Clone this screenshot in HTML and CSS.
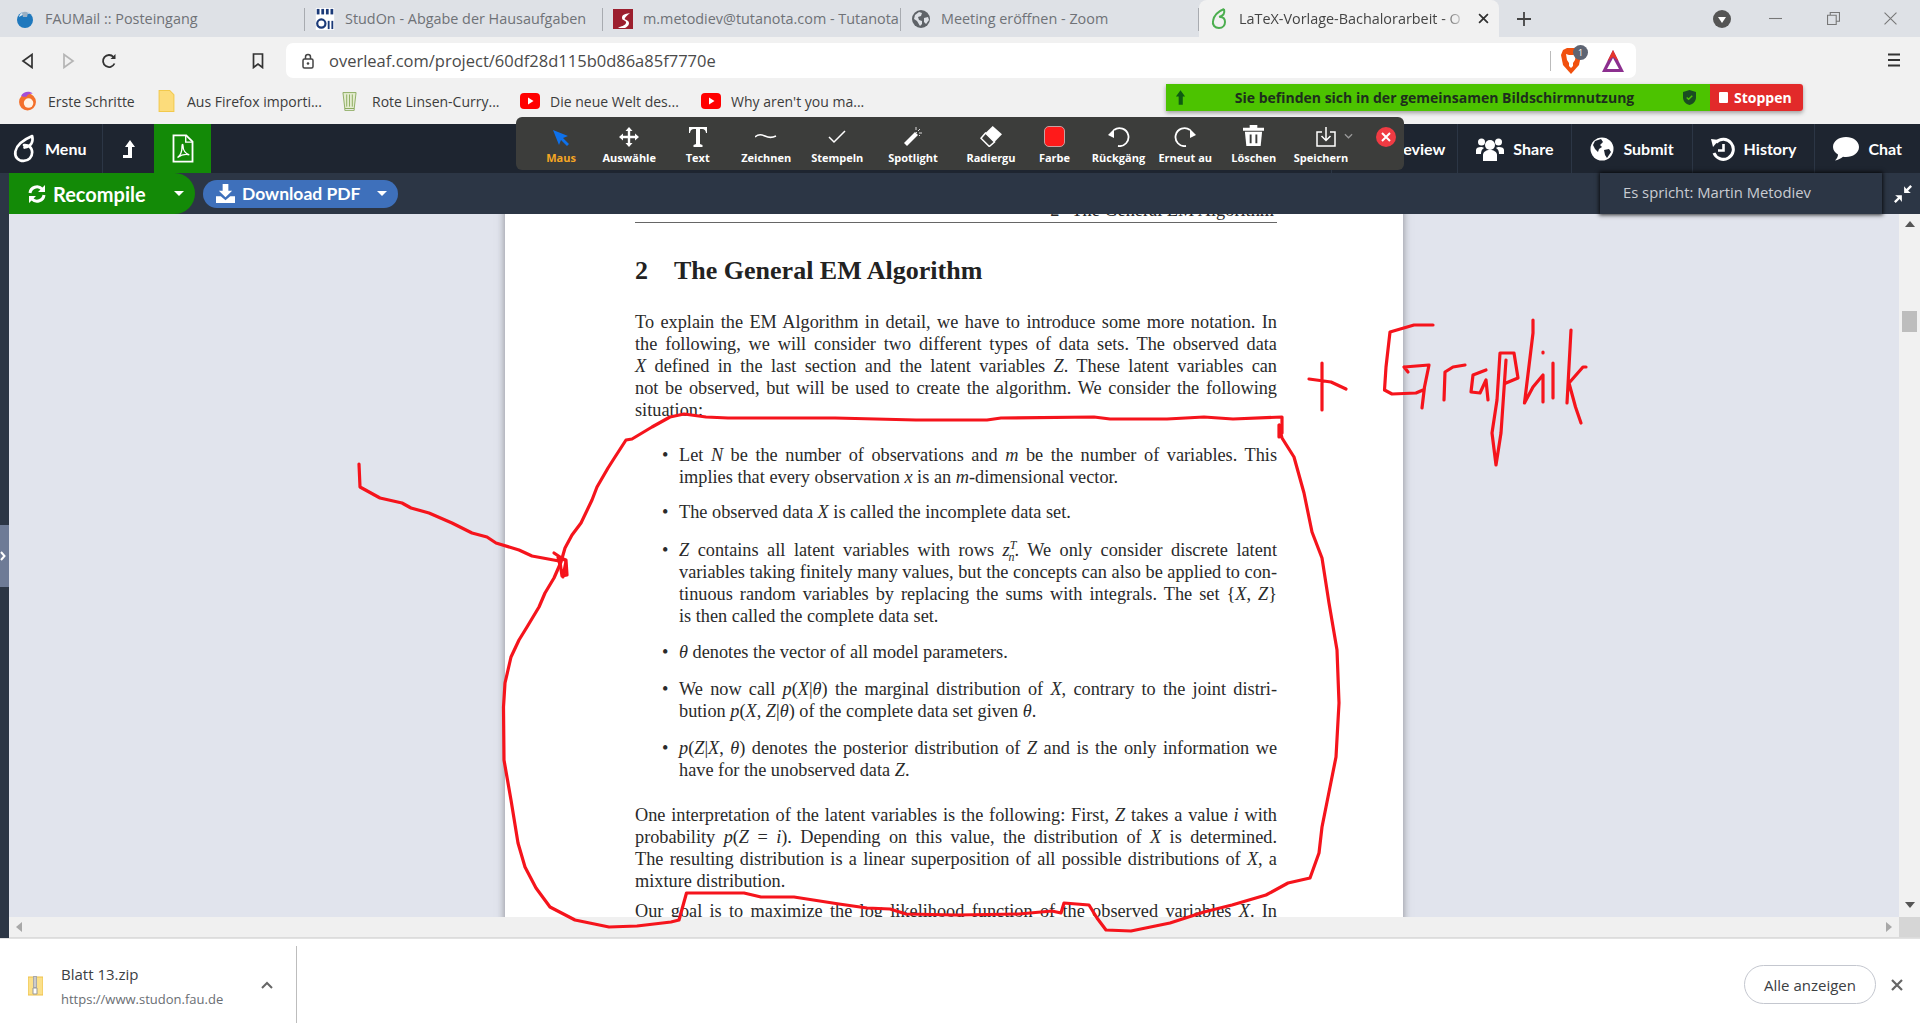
FILE: index.html
```html
<!DOCTYPE html>
<html lang="de">
<head>
    <meta charset="UTF-8">
    <title>LaTeX-Vorlage-Bachalorarbeit - Online LaTeX Editor Overleaf</title>
    <link rel="stylesheet" href="styles.css">
</head>
<body>
    <!-- Browser -->
    <div class="tabs">
        <div class="tab tab-first">
            <svg class="tab-icon" viewBox="0 0 20 20"><circle cx="10" cy="11" r="8" fill="#1f78bd"/><path d="M4 8c1-5 8-7 11-3-3-1-7 0-11 3z" fill="#dfe9f2"/><path d="M7 4a4 4 0 0 1 6 0l-1 4H8z" fill="#9ab0c4"/></svg>
            <span class="tab-title">FAUMail :: Posteingang</span>
        </div>
        <div class="tab">
            <svg class="tab-icon" viewBox="0 0 20 24"><rect width="20" height="24" fill="#fff"/><g fill="#1b3a78"><rect x="1" y="1" width="3" height="6"/><rect x="6" y="1" width="3" height="6"/><rect x="11" y="1" width="3" height="6"/><rect x="16" y="1" width="3" height="6"/><rect x="13" y="14" width="2" height="9"/><rect x="17" y="14" width="2" height="9"/></g><circle cx="6" cy="17" r="4.5" fill="none" stroke="#1b3a78" stroke-width="2.4"/></svg>
            <span class="tab-title">StudOn - Abgabe der Hausaufgaben</span>
        </div>
        <div class="tab">
            <svg class="tab-icon" viewBox="0 0 20 20"><path d="M0 0h20v20H0z" fill="#9c1f2e"/><path d="M17 4c-6 1-8 2-8 5s5 2 4 5-5 3-8 5h7c4-2 5-5 3-7s-4-1-3-3 3-3 5-5z" fill="#fff"/></svg>
            <span class="tab-title">m.metodiev@tutanota.com - Tutanota</span>
        </div>
        <div class="tab">
            <svg class="tab-icon" viewBox="0 0 20 20"><circle cx="10" cy="10" r="9" fill="#5f6368"/><path d="M4 6l4-3 3 1-1 3-3 1 1 3 3 1v3l-2 2-3-5-3-2zM13 9l4-1 1 3-3 4-2-2z" fill="#dee1e6"/></svg>
            <span class="tab-title">Meeting eröffnen - Zoom</span>
        </div>
        <div class="tab tab-active">
            <svg class="tab-icon tab-leaf" viewBox="0 0 16 22"><path d="M13 1C8 3 3 7 2 13c-1 4 2 7 6 7s6-3 6-6-2-5-5-5M13 1c1 4-1 7-5 8" fill="none" stroke="#4cae4f" stroke-width="2"/></svg>
            <span class="tab-title">LaTeX-Vorlage-Bachalorarbeit - O</span>
            <svg class="tab-close" viewBox="0 0 10 10"><path d="M1 1l8 8M9 1l-8 8" stroke="#333" stroke-width="1.6"/></svg>
        </div>
        <svg class="tab-plus" viewBox="0 0 14 14"><path d="M7 0v14M0 7h14" stroke="#444" stroke-width="1.8"/></svg>
        <div class="win-controls">
            <svg class="win-round" viewBox="0 0 18 18"><circle cx="9" cy="9" r="9" fill="#555"/><path d="M5 7h8l-4 6z" fill="#fff"/></svg>
            <svg class="win-btn win-min" viewBox="0 0 12 12"><path d="M0 6h12" stroke="#777"/></svg>
            <svg class="win-btn win-max" viewBox="0 0 12 12"><path d="M.5 3h8v8.500h-8zM3 3V.5h8.500v8H8.500" fill="none" stroke="#777"/></svg>
            <svg class="win-btn win-x" viewBox="0 0 12 12"><path d="M.5.5l11 11M11.500.5l-11 11" stroke="#777"/></svg>
        </div>
    </div>

    <div class="toolbar">
        <svg class="nav-btn nav-back" viewBox="0 0 14 16"><path d="M11 1.500v13L2 8z" fill="none" stroke="#333" stroke-width="1.700"/></svg>
        <svg class="nav-btn nav-fwd" viewBox="0 0 14 16"><path d="M3 1.500v13L12 8z" fill="none" stroke="#b5b5b5" stroke-width="1.700"/></svg>
        <svg class="nav-btn nav-reload" viewBox="0 0 16 16"><path d="M13.500 10.500A6 6 0 1 1 12.500 4" fill="none" stroke="#333" stroke-width="1.800"/><path d="M14.500 1v5h-5z" fill="#333"/></svg>
        <svg class="nav-btn nav-mark" viewBox="0 0 14 16"><path d="M2.500 1h9v13.500L7 11l-4.500 3.500z" fill="none" stroke="#333" stroke-width="1.700"/></svg>
        <div class="omnibox">
            <svg class="lock" viewBox="0 0 12 16"><rect x="1" y="6" width="10" height="9" rx="1.500" fill="none" stroke="#444" stroke-width="1.500"/><path d="M3.500 6V4a2.500 2.500 0 0 1 5 0v2" fill="none" stroke="#444" stroke-width="1.500"/><circle cx="6" cy="10.500" r="1.300" fill="#444"/></svg>
            <span class="url">overleaf.com/project/60df28d115b0d86a85f7770e</span>
            <span class="omni-sep"></span>
            <span class="brave">
                <svg class="brave-lion" viewBox="0 0 20 26"><path d="M2 2l4-2h8l4 2 2 5-2 10-8 9-8-9L0 7z" fill="#f1500e"/><path d="M5 6l3 1h4l3-1-1 6-2 3v3l-2 2-2-2v-3l-2-3z" fill="#fff"/></svg>
                <span class="brave-badge">1</span>
            </span>
            <svg class="bat" viewBox="0 0 24 24"><path d="M12 1L1 23h22z" fill="#8c2f8f"/><path d="M12 1L6.500 12 12 8l5.500 4z" fill="#e5352b"/><path d="M12 9l-6 11h12z" fill="#fff"/></svg>
        </div>
        <svg class="chrome-menu" viewBox="0 0 12 14"><path d="M0 1.500h12M0 7h12M0 12.500h12" stroke="#333" stroke-width="1.800"/></svg>
    </div>

    <div class="bookmarks">
        <div class="bm">
            <svg class="bm-icon" viewBox="0 0 18 20"><circle cx="9" cy="11" r="8" fill="#f4702b"/><circle cx="10" cy="12" r="4.500" fill="#fff3e6"/><path d="M3 5c2-4 8-5 11-2-3 0-5 1-6 3-3 0-4 0-5-1z" fill="#a34dd6"/></svg>
            <span>Erste Schritte</span>
        </div>
        <div class="bm">
            <svg class="bm-icon" viewBox="0 0 18 20"><path d="M2 0h10l4 4v16H2z" fill="#fcdc7b" stroke="#f2c94c"/></svg>
            <span>Aus Firefox importi...</span>
        </div>
        <div class="bm">
            <svg class="bm-icon" viewBox="0 0 16 22"><path d="M1 2h14l-2 17H3z" fill="#e4ecd0" stroke="#8bab5e"/><path d="M3 19h10v2H3zM5 4v13M8 4v13M11 4v13" stroke="#8bab5e" fill="none"/></svg>
            <span>Rote Linsen-Curry...</span>
        </div>
        <div class="bm">
            <svg class="bm-icon bm-yt" viewBox="0 0 20 20"><rect y="2" width="20" height="16" rx="4" fill="#f00"/><path d="M8 6.500l5.500 3.500L8 13.500z" fill="#fff"/></svg>
            <span>Die neue Welt des...</span>
        </div>
        <div class="bm">
            <svg class="bm-icon bm-yt" viewBox="0 0 20 20"><rect y="2" width="20" height="16" rx="4" fill="#f00"/><path d="M8 6.500l5.500 3.500L8 13.500z" fill="#fff"/></svg>
            <span>Why aren't you ma...</span>
        </div>
    </div>

    <!-- Overleaf -->
    <header class="ol-nav">
        <div class="ol-item ol-menu">
            <svg class="ol-logo" viewBox="0 0 24 30"><path d="M20 2C13 5 4 10 2.500 18c-1 6 3 10 8.500 10s9-4 9-9-4-8-8.500-7.500M20 2c1.500 6-1 11-8 12" fill="none" stroke="#fff" stroke-width="2.800" stroke-linecap="round"/></svg>
            <span>Menu</span>
        </div>
        <div class="ol-up">
            <svg viewBox="0 0 12 18" width="12" height="18"><path d="M7 0l5 7H9v11H0v-3h5V7H2z" fill="#fff"/></svg>
        </div>
        <div class="ol-pdf">
            <svg viewBox="0 0 24 32" width="24" height="29"><path d="M1.500 1.500h14l7 7v22h-21z" fill="none" stroke="#fff" stroke-width="2"/><path d="M15 1.500v7.500h7.500M6 26c3-2 5-7 5-13 0-2 1-2 1 0 0 5 3 9 7 10-4-1-9 0-13 3z" fill="none" stroke="#fff" stroke-width="1.500"/></svg>
        </div>
        <div class="ol-right">
            <div class="ol-item ol-review"><span>Review</span></div>
            <div class="ol-item">
                <svg viewBox="0 0 28 28" width="28" height="28"><circle cx="14" cy="10" r="5" fill="#fff"/><path d="M7 26v-6c0-3 3-5 7-5s7 2 7 5v6z" fill="#fff"/><circle cx="5.500" cy="7" r="3.500" fill="#fff"/><circle cx="22.500" cy="7" r="3.500" fill="#fff"/><path d="M0 19v-4c0-2 2-3 5-3 1 0 2 0 3 1-2 1-3 3-3 6zM28 19v-4c0-2-2-3-5-3-1 0-2 0-3 1 2 1 3 3 3 6z" fill="#fff"/></svg>
                <span>Share</span>
            </div>
            <div class="ol-item">
                <svg viewBox="0 0 24 24" width="24" height="24"><circle cx="12" cy="12" r="11.500" fill="#fff"/><path d="M5 4l6-2 2 3-3 3 2 2-3 2-1 3-3-3-2-4zM14 13l5-1 2 3-4 6-2-3z" fill="#1e2530"/></svg>
                <span>Submit</span>
            </div>
            <div class="ol-item">
                <svg viewBox="0 0 24 24" width="24" height="24"><path d="M5 5.500A10 10 0 1 1 3 16" fill="none" stroke="#fff" stroke-width="3"/><path d="M0 2l8 1-6 7z" fill="#fff"/><path d="M12.500 7v6.500H7" fill="none" stroke="#fff" stroke-width="2.600"/></svg>
                <span>History</span>
            </div>
            <div class="ol-item">
                <svg viewBox="0 0 26 24" width="26" height="24"><path d="M13 0c7 0 13 4 13 10s-6 10-13 10c-1 0-2 0-3-.200C8 21.500 5 23 2 23.500c2-2 3-4 3-6C2 15.500 0 13 0 10 0 4 6 0 13 0z" fill="#fff"/></svg>
                <span>Chat</span>
            </div>
        </div>
    </header>

    <div class="ol-sub">
        <div class="recompile">
            <svg viewBox="0 0 18 20" width="18" height="20"><path d="M2 9a7 7 0 0 1 12-4M16 11a7 7 0 0 1-12 4" fill="none" stroke="#fff" stroke-width="3"/><path d="M17 1v7h-7zM1 19v-7h7z" fill="#fff"/></svg>
            <span>Recompile</span>
            <i class="caret caret-green"></i>
        </div>
        <div class="download">
            <svg viewBox="0 0 20 20" width="19" height="19"><path d="M7 0h6v7h4l-7 7-7-7h4z" fill="#fff"/><path d="M0 13h5l5 4 5-4h5v7H0z" fill="#fff"/></svg>
            <span>Download PDF</span>
            <i class="caret"></i>
        </div>
        <svg class="compress" viewBox="0 0 16 16" width="18" height="18"><path d="M16 1.500L14.500 0 11 3.500 9 1v6h6l-2.500-2zM0 14.500L1.500 16 5 12.500 7 15V9H1l2.500 2z" fill="#fff"/></svg>
    </div>

    <main class="ol-body">
        <div class="strip"><div class="strip-handle"><svg viewBox="0 0 6 10" width="6" height="10"><path d="M1 1l3.500 4L1 9" fill="none" stroke="#fff" stroke-width="2"/></svg></div></div>
        <div class="viewer">
            <div class="viewer-top">
                <div class="pdf-scroll">
                    <article class="page">
                        <div class="run-head"><span class="run-num">2</span>The General EM Algorithm</div>
                        <h2 class="sec"><span class="sec-num">2</span>The General EM Algorithm</h2>
                        <p class="par">
                            <span class="ln">To explain the EM Algorithm in detail, we have to introduce some more notation. In</span>
                            <span class="ln">the following, we will consider two different types of data sets. The observed data</span>
                            <span class="ln"><i>X</i> defined in the last section and the latent variables <i>Z</i>. These latent variables can</span>
                            <span class="ln">not be observed, but will be used to create the algorithm. We consider the following</span>
                            <span class="ln ln-end">situation:</span>
                        </p>
                        <ul class="items">
                            <li class="it it-1">
                                <span class="ln">Let <i>N</i> be the number of observations and <i>m</i> be the number of variables. This</span>
                                <span class="ln ln-end">implies that every observation <i>x</i> is an <i>m</i>-dimensional vector.</span>
                            </li>
                            <li class="it it-2">
                                <span class="ln ln-end">The observed data <i>X</i> is called the incomplete data set.</span>
                            </li>
                            <li class="it it-3">
                                <span class="ln"><i>Z</i> contains all latent variables with rows <i>z</i><sup class="idx"><i>T</i></sup><sub class="idx idx-low"><i>n</i></sub>. We only consider discrete latent</span>
                                <span class="ln">variables taking finitely many values, but the concepts can also be applied to con-</span>
                                <span class="ln">tinuous random variables by replacing the sums with integrals. The set {<i>X</i>, <i>Z</i>}</span>
                                <span class="ln ln-end">is then called the complete data set.</span>
                            </li>
                            <li class="it it-4">
                                <span class="ln ln-end"><i>θ</i> denotes the vector of all model parameters.</span>
                            </li>
                            <li class="it it-5">
                                <span class="ln">We now call <i>p</i>(<i>X</i>|<i>θ</i>) the marginal distribution of <i>X</i>, contrary to the joint distri-</span>
                                <span class="ln ln-end">bution <i>p</i>(<i>X</i>, <i>Z</i>|<i>θ</i>) of the complete data set given <i>θ</i>.</span>
                            </li>
                            <li class="it it-5">
                                <span class="ln"><i>p</i>(<i>Z</i>|<i>X</i>, <i>θ</i>) denotes the posterior distribution of <i>Z</i> and is the only information we</span>
                                <span class="ln ln-end">have for the unobserved data <i>Z</i>.</span>
                            </li>
                        </ul>
                        <p class="par par-2">
                            <span class="ln">One interpretation of the latent variables is the following: First, <i>Z</i> takes a value <i>i</i> with</span>
                            <span class="ln">probability <i>p</i>(<i>Z</i> = <i>i</i>). Depending on this value, the distribution of <i>X</i> is determined.</span>
                            <span class="ln">The resulting distribution is a linear superposition of all possible distributions of <i>X</i>, a</span>
                            <span class="ln ln-end">mixture distribution.</span>
                        </p>
                        <p class="par par-3">
                            <span class="ln">Our goal is to maximize the log likelihood function of the observed variables <i>X</i>. In</span>
                        </p>
                    </article>
                </div>
                <div class="vscroll">
                    <i class="arr arr-up"></i>
                    <div class="vthumb"></div>
                    <i class="arr arr-down"></i>
                </div>
            </div>
            <div class="hscroll">
                <i class="arr arr-left"></i>
                <i class="arr arr-right"></i>
                <div class="corner"></div>
            </div>
        </div>
    </main>

    <footer class="shelf">
        <svg class="zip" viewBox="0 0 15 20" width="15" height="20"><path d="M0 1h15v18H0z" fill="#fbe08a" stroke="#eec14a"/><path d="M5 0h4v12H5z" fill="#a9a9a9"/><path d="M6 2h2M6 4h2M6 6h2M6 8h2M6 10h2" stroke="#eee"/><path d="M5 12h4v6H5z" fill="#fff" stroke="#999"/></svg>
        <div class="dl-text">
            <div class="dl-name">Blatt 13.zip</div>
            <div class="dl-url">https://www.studon.fau.de</div>
        </div>
        <svg class="dl-chev" viewBox="0 0 12 8" width="12" height="8"><path d="M1 7l5-5 5 5" fill="none" stroke="#666" stroke-width="2"/></svg>
        <span class="dl-sep"></span>
        <button class="show-all">Alle anzeigen</button>
        <svg class="shelf-x" viewBox="0 0 12 12" width="12" height="12"><path d="M1 1l10 10M11 1L1 11" stroke="#666" stroke-width="2.200"/></svg>
    </footer>

    <!-- Zoom Overlays -->
    <div class="share-bar">
        <div class="share-msg">
            <svg class="share-pin" viewBox="0 0 12 16" width="11" height="15"><path d="M6 0l5 7H8.500v9H4V7H1z" fill="#0f5a12"/></svg>
            <span>Sie befinden sich in der gemeinsamen Bildschirmnutzung</span>
            <svg class="share-shield" viewBox="0 0 14 16" width="13" height="15"><path d="M7 0l7 2v6c0 4-3 7-7 8-4-1-7-4-7-8V2z" fill="#1a4d22"/><path d="M4 8l2 2 4-4" fill="none" stroke="#4cc300" stroke-width="1.500"/></svg>
        </div>
        <div class="share-stop"><i></i>Stoppen</div>
    </div>

    <div class="zoom-bar">
        <div class="z-item z-on">
            <svg viewBox="0 0 18 18" width="18" height="18"><path d="M1 1l15 6-5 2 6 6-2 2-6-6-2 5z" fill="#0e71eb"/></svg>
            <span>Maus</span>
        </div>
        <div class="z-item">
            <svg viewBox="0 0 20 20" width="20" height="20"><path d="M10 0l3.500 4h-2.300v4.800H16V6.500l4 3.500-4 3.500v-2.300h-4.800V16h2.300L10 20l-3.500-4h2.300v-4.800H4v2.300L0 10l4-3.500v2.300h4.800V4H6.500z" fill="#fff"/></svg>
            <span>Auswähle</span>
        </div>
        <div class="z-item">
            <svg viewBox="0 0 20 20" width="20" height="20"><path d="M1 0h18v6h-1c-.5-3-1.500-4-4-4h-2v15l2.500 1v2h-9v-2L8 17V2H6C3.500 2 2.500 3 2 6H1z" fill="#fff"/></svg>
            <span>Text</span>
        </div>
        <div class="z-item">
            <svg viewBox="0 0 22 20" width="22" height="20"><path d="M0 10c3-3 6-3 10-1s7 2 11 0" fill="none" stroke="#fff" stroke-width="1.500"/></svg>
            <span>Zeichnen</span>
        </div>
        <div class="z-item">
            <svg viewBox="0 0 18 20" width="18" height="20"><path d="M1 10l5 5L17 4" fill="none" stroke="#fff" stroke-width="1.500"/></svg>
            <span>Stempeln</span>
        </div>
        <div class="z-item">
            <svg viewBox="0 0 20 20" width="20" height="20"><path d="M12 5l3 3L4 19l-3-3z" fill="#fff"/><path d="M13 0v3M17 2l-2 2M19 6h-3M13 5l1 1M17 9l-1-1" stroke="#ddd" stroke-width="1"/></svg>
            <span>Spotlight</span>
        </div>
        <div class="z-item z-erase">
            <svg viewBox="0 0 22 21" width="22" height="21"><path d="M12.700 0L22 8.300 14.500 16 5.500 7z" fill="#fff"/><path d="M5.500 7L1 12.300l8.300 8.200 5.200-4.500z" fill="none" stroke="#fff" stroke-width="1.500"/></svg>
            <span>Radiergu</span>
        </div>
        <div class="z-item">
            <span class="z-color"></span>
            <span>Farbe</span>
        </div>
        <div class="z-item">
            <svg viewBox="0 0 22 22" width="22" height="22"><path d="M6 5a9 9 0 1 1 4 16" fill="none" stroke="#fff" stroke-width="1.800"/><path d="M0 10l6-6v9z" fill="#fff"/></svg>
            <span>Rückgäng</span>
        </div>
        <div class="z-item">
            <svg viewBox="0 0 22 22" width="22" height="22"><path d="M16 5a9 9 0 1 0-4 16" fill="none" stroke="#fff" stroke-width="1.800"/><path d="M22 10l-6-6v9z" fill="#fff"/></svg>
            <span>Erneut au</span>
        </div>
        <div class="z-item">
            <svg viewBox="0 0 22 24" width="21" height="23"><path d="M0 4h22v3H0zM7 4V1h8v3" fill="#fff"/><path d="M2 8h18l-1.500 15h-15z" fill="#fff"/><path d="M8 11v9M14 11v9" stroke="#3c3d3b" stroke-width="2"/></svg>
            <span>Löschen</span>
        </div>
        <div class="z-item z-save">
            <div class="z-save-icons">
                <svg viewBox="0 0 20 20" width="20" height="20"><path d="M6 5H1v14h18V5h-5M10 0v13M5.500 9l4.500 4.500L14.500 9" fill="none" stroke="#fff" stroke-width="1.500"/></svg>
                <svg class="z-chev" viewBox="0 0 10 6" width="9" height="6"><path d="M1 1l4 4 4-4" fill="none" stroke="#999" stroke-width="1.400"/></svg>
            </div>
            <span>Speichern</span>
        </div>
        <div class="z-close"><svg viewBox="0 0 10 10" width="10" height="10"><path d="M1 1l8 8M9 1L1 9" stroke="#fff" stroke-width="2"/></svg></div>
    </div>

    <div class="speaker">Es spricht: Martin Metodiev</div>

    <svg class="ink" viewBox="0 0 1920 1030">
        <path d="M359 464L360 487 380 498 402 503 411 508 429 513 452 523 472 533 487 537 496 543 519 550 532 556 559 561"/>
        <path d="M554 553L566 561 563 577 558 557 566 560 567 575 562 576 560 562"/>
        <path d="M1001 418L987 420 916 420 835 418 728 418 706 417 684 414 670 417 652 427 632 439 626 440 615 457 608 468 597 487 592 500 581 523 572 535 565 548 561 562 554 578 545 593 539 607 527 627 519 640 511 657 505 683 503.500 707 504 760 511 800 518 843 525 867 536 888 550 907 575 920 609 927 637 926 671 922 679 920 686.500 893 744 893 761 897 794 897 839 904 867 908 890 909 906 914 957 915 1019 914 1052 911 1061 913 1064 903 1089 905 1097 918 1106 930 1131 931 1170 923 1204 912 1232 905 1266 895 1288 883 1310 878 1319 853 1322 827 1330 787 1336 757 1339 703 1337 650 1329 603 1322 558 1312 532 1304 493 1294 457 1282 438 1279 425 1279 437 1282 433 1282 417 1233 419 1204 417 1167 419 1110 419 1094 417 1001 418"/>
        <path d="M1322 363V410M1309 379L1331 382 1346 389"/>
        <path d="M1433 325H1414L1390 332 1386 367 1384.500 390 1392 394 1416 393 1423 390M1404 367L1429 365 1424.500 387 1422 408M1404 367L1408 372"/>
        <path d="M1444 400L1445 372 1453 367 1465 365"/>
        <path d="M1486 370L1473 375 1471 392 1480 393 1486 380 1488 400"/>
        <path d="M1500 353L1497 400 1492 433 1496 465 1501 433 1506 360M1500 353H1514L1518 378 1506 383"/>
        <path d="M1533 320V333L1524.500 403 1533 387 1543 375V402"/>
        <path d="M1553 363V398M1543 352V353"/>
        <path d="M1571 330L1567 403M1586 367H1583L1569 383 1575.500 407 1581 423"/>
    </svg>
</body>
</html>
```

FILE: styles.css
```css
* {
    box-sizing: border-box;
}
html, body {
    margin: 0;
    padding: 0;
}
body {
    position: relative;
    width: 1920px;
    height: 1030px;
    overflow: hidden;
    background: #fff;
    font-family: "Open Sans", "Noto Sans", sans-serif;
}

/* Tabs */
.tabs {
    display: flex;
    height: 37px;
    background: #dee1e6;
    align-items: stretch;
}
.tab {
    display: flex;
    align-items: center;
    width: 298px;
    padding-left: 10px;
    font-size: 14.4px;
    color: #6f7277;
    white-space: nowrap;
    overflow: hidden;
    position: relative;
}
.tab::after {
    content: "";
    position: absolute;
    right: 0;
    top: 8px;
    bottom: 6px;
    width: 1px;
    background: #a8abb0;
}
.tab-first {
    width: 305px;
    padding-left: 15px;
}
.tab-icon {
    width: 20px;
    height: 22px;
    flex: none;
    margin-right: 10px;
}
.tab-active {
    width: 300px;
    margin-left: 0;
    padding-left: 12px;
    background: #f1f1f1;
    border-radius: 8px 8px 0 0;
    color: #444;
}
.tab-active::after {
    display: none;
}
.tab-leaf {
    width: 16px;
    margin-right: 12px;
}
.tab-active .tab-title {
    width: 227px;
    overflow: hidden;
    -webkit-mask-image: linear-gradient(to right, #000 90%, transparent);
    mask-image: linear-gradient(to right, #000 90%, transparent);
}
.tab-close {
    width: 11px;
    height: 11px;
    margin-left: 12px;
}
.tab-plus {
    width: 14px;
    height: 14px;
    margin: 12px 0 0 18px;
}
.win-controls {
    margin-left: auto;
    display: flex;
    align-items: center;
}
.win-round {
    width: 18px;
    height: 18px;
    margin-right: 38px;
}
.win-btn {
    width: 13px;
    height: 13px;
}
.win-min {
    margin-right: 45px;
}
.win-max {
    margin-right: 44px;
}
.win-x {
    margin-right: 23px;
}

/* Adressleiste */
.toolbar {
    position: relative;
    display: flex;
    align-items: center;
    height: 47px;
    background: #f1f1f1;
}
.nav-btn {
    width: 16px;
    height: 16px;
    flex: none;
}
.nav-back {
    margin-left: 20px;
}
.nav-fwd {
    margin-left: 24px;
}
.nav-reload {
    margin-left: 25px;
}
.nav-mark {
    margin-left: 133px;
}
.omnibox {
    display: flex;
    align-items: center;
    width: 1350px;
    height: 35px;
    margin: 0 0 0 20px;
    padding-left: 16px;
    background: #fff;
    border-radius: 7px;
}
.lock {
    width: 12px;
    height: 16px;
    flex: none;
}
.url {
    margin-left: 15px;
    font-size: 16.5px;
    color: #4a4a4a;
    white-space: nowrap;
}
.omni-sep {
    width: 1px;
    height: 20px;
    margin-left: auto;
    background: #bbb;
}
.brave {
    position: relative;
    width: 20px;
    height: 26px;
    margin-left: 10px;
}
.brave-lion {
    width: 20px;
    height: 26px;
}
.brave-badge {
    position: absolute;
    left: 12px;
    top: -3px;
    width: 15px;
    height: 15px;
    border-radius: 50%;
    background: #5e6472;
    color: #fff;
    font-size: 9px;
    line-height: 15px;
    text-align: center;
}
.bat {
    width: 24px;
    height: 24px;
    margin: 0 11px 0 20px;
}
.chrome-menu {
    width: 12px;
    height: 16px;
    margin: -2px 0 0 252px;
    flex: none;
}

/* Lesezeichen */
.bookmarks {
    display: grid;
    grid-template-columns: 139px 185px 178px 181px 200px;
    height: 40px;
    padding: 0 0 6px 18px;
    background: #f1f1f1;
    align-items: center;
}
.bm {
    display: flex;
    align-items: center;
    font-size: 14px;
    color: #3c3c3c;
    white-space: nowrap;
}
.bm-icon {
    width: 19px;
    height: 22px;
    flex: none;
    margin-right: 11px;
}
.bm:nth-child(3) .bm-icon {
    width: 15px;
    margin-right: 15px;
}
.bm-yt {
    width: 20px;
    height: 20px;
    margin-right: 10px;
}

/* Overleaf Kopf */
.ol-nav {
    display: flex;
    height: 49px;
    background: #1e2530;
    color: #fff;
    font-family: Lato, "Open Sans", sans-serif;
    font-weight: 700;
    font-size: 16px;
}
.ol-item {
    display: flex;
    align-items: center;
    gap: 9px;
    padding: 0 18px;
    border-left: 1px solid #2c3645;
}
.ol-menu {
    width: 103px;
    padding: 0 0 0 13px;
    border-left: 0;
    border-right: 1px solid #2c3645;
}
.ol-logo {
    width: 23px;
    height: 29px;
}
.ol-up {
    display: flex;
    align-items: center;
    justify-content: center;
    width: 51px;
}
.ol-pdf {
    display: flex;
    align-items: center;
    justify-content: center;
    width: 57px;
    background: #138a07;
}
.ol-right {
    display: flex;
    margin-left: auto;
}
.ol-review {
    width: 126px;
    padding-right: 12px;
    justify-content: flex-end;
}

.ol-sub {
    display: flex;
    align-items: center;
    height: 41px;
    padding-left: 9px;
    background: #2c3645;
    color: #fff;
    font-family: Lato, "Open Sans", sans-serif;
}
.recompile {
    display: flex;
    align-items: center;
    width: 186px;
    height: 41px;
    padding-left: 19px;
    background: #138a07;
    border-radius: 0 22px 22px 0;
    font-size: 20px;
    font-weight: 700;
}
.recompile span {
    margin-left: 7px;
}
.download {
    display: flex;
    align-items: center;
    width: 195px;
    height: 28px;
    margin-left: 8px;
    padding-left: 13px;
    background: #3e70bb;
    border-radius: 14px;
    font-size: 17.5px;
    font-weight: 700;
}
.download span {
    margin-left: 7px;
}
.caret {
    width: 0;
    height: 0;
    margin-left: auto;
    margin-right: 11px;
    border-left: 5px solid transparent;
    border-right: 5px solid transparent;
    border-top: 5px solid #fff;
}
.compress {
    margin: 0 8px 0 auto;
}

/* PDF Bereich */
.ol-body {
    display: flex;
    height: 724px;
}
.strip {
    display: flex;
    width: 9px;
    padding-top: 311px;
    background: #2c3645;
    flex: none;
}
.strip-handle {
    display: flex;
    align-items: center;
    width: 9px;
    height: 62px;
    background: #6e7b96;
}
.viewer {
    display: flex;
    flex-direction: column;
    flex: 1;
    min-width: 0;
}
.viewer-top {
    display: flex;
    flex: 1;
    min-height: 0;
}
.pdf-scroll {
    flex: 1;
    overflow: hidden;
    background: #e1e4ed;
}
.page {
    width: 898px;
    height: 800px;
    margin-left: 496px;
    padding: 0 126px 0 130px;
    background: #fff;
    box-shadow: 0 0 8px rgba(60, 60, 70, .55);
    font-family: "Liberation Serif", "DejaVu Serif", serif;
    font-size: 18.3px;
    line-height: 22px;
    color: #2a2a2a;
}
.run-head {
    height: 24px;
    margin-top: -15px;
    border-bottom: 1px solid #666;
    text-align: right;
    padding-right: 3px;
}
.run-num {
    margin-right: 12px;
}
.sec {
    margin: 33px 0 0;
    font-size: 26px;
    line-height: 30px;
    font-weight: 700;
    color: #222;
}
.sec-num {
    display: inline-block;
    width: 39px;
}
.par {
    margin: 25px 0 0;
}
.ln {
    display: block;
    text-align: justify;
    text-align-last: justify;
    white-space: normal;
}
.ln-end {
    text-align-last: left;
}
.items {
    margin: 23px 0 0;
    padding: 0 0 0 44px;
}
.it {
    position: relative;
    list-style: none;
}
.it::before {
    content: "•";
    position: absolute;
    left: -17px;
    top: 0;
}
.it-2 {
    margin-top: 13px;
}
.it-3 {
    margin-top: 16px;
}
.it-4 {
    margin-top: 14px;
}
.it-5 {
    margin-top: 15px;
}
.par-2 {
    margin-top: 23px;
}
.par-3 {
    margin-top: 8px;
}
.idx {
    font-size: 12px;
    line-height: 0;
}
.idx-low {
    margin-left: -8px;
}

/* Scrollbalken */
.vscroll {
    position: relative;
    display: flex;
    flex-direction: column;
    align-items: center;
    width: 21px;
    background: #f1f1f1;
    flex: none;
}
.vthumb {
    width: 15px;
    height: 21px;
    margin-top: 84px;
    background: #bdbdbd;
}
.arr {
    width: 0;
    height: 0;
    border: 5px solid transparent;
}
.arr-up {
    margin-top: 7px;
    border-top: 0;
    border-bottom: 6px solid #555;
}
.arr-down {
    margin-top: auto;
    margin-bottom: 9px;
    border-bottom: 0;
    border-top: 6px solid #555;
}
.hscroll {
    display: flex;
    align-items: center;
    height: 21px;
    background: #f0f0f0;
    border-bottom: 1px solid #dcdcdc;
    flex: none;
}
.arr-left {
    margin-left: 7px;
    border-left: 0;
    border-right: 6px solid #a8a8a8;
}
.arr-right {
    margin-left: auto;
    margin-right: 7px;
    border-right: 0;
    border-left: 6px solid #a8a8a8;
}
.corner {
    width: 21px;
    height: 100%;
    background: #d6d6d6;
}

/* Download Leiste */
.shelf {
    display: flex;
    align-items: center;
    height: 92px;
    background: #fff;
    border-top: 1px solid #e2e2e2;
}
.zip {
    margin-left: 28px;
    margin-top: 2px;
    flex: none;
}
.dl-text {
    width: 191px;
    margin: 3px 0 0 18px;
}
.dl-name {
    font-size: 15px;
    line-height: 20px;
    color: #3c4043;
}
.dl-url {
    margin-top: 6px;
    font-size: 13px;
    line-height: 18px;
    color: #6a6e73;
}
.dl-chev {
    margin-left: 9px;
    flex: none;
}
.dl-sep {
    width: 1px;
    height: 77px;
    margin-left: 23px;
    background: #bdbdbd;
}
.show-all {
    width: 132px;
    height: 39px;
    margin-left: auto;
    background: #fff;
    border: 1px solid #c4c7cf;
    border-radius: 20px;
    font: 15px "Open Sans", "Noto Sans", sans-serif;
    color: #3c4043;
}
.shelf-x {
    margin: 0 17px 0 15px;
}

/* Zoom Overlays */
.share-bar {
    position: absolute;
    left: 1166px;
    top: 84px;
    display: flex;
    width: 637px;
    height: 27px;
    box-shadow: 0 2px 4px rgba(0, 0, 0, .35);
    border-radius: 0 3px 3px 0;
}
.share-msg {
    display: flex;
    align-items: center;
    width: 544px;
    padding: 0 14px 0 9px;
    background: #4cc300;
    font-size: 14px;
    font-weight: 700;
    color: #1d2e1d;
}
.share-msg span {
    margin: 0 auto;
    white-space: nowrap;
}
.share-stop {
    display: flex;
    align-items: center;
    gap: 6px;
    width: 93px;
    padding-left: 9px;
    background: #e22a2a;
    border-radius: 0 3px 3px 0;
    font-size: 14px;
    font-weight: 700;
    color: #fff;
}
.share-stop i {
    width: 9px;
    height: 11px;
    background: #fff;
    border-radius: 1px;
}

.zoom-bar {
    position: absolute;
    left: 516px;
    top: 117px;
    display: grid;
    grid-template-columns: 68px 68.5px 68.5px 68.5px 73.5px 78px 71px 63px 65px 68.5px 68.5px 66px 39px;
    width: 888px;
    height: 53px;
    padding-left: 11px;
    background: #3c3d3b;
    border-radius: 6px;
    font-size: 11px;
    font-weight: 700;
    color: #fff;
}
.z-item {
    display: flex;
    flex-direction: column;
    align-items: center;
    justify-content: flex-end;
    padding-bottom: 5px;
    white-space: nowrap;
}
.z-item svg {
    margin-bottom: 3px;
}
.z-erase {
    margin-left: 7px;
}
.z-on {
    color: #f5a623;
}
.z-color {
    width: 21px;
    height: 21px;
    margin-bottom: 3px;
    background: #ff1a1a;
    border: 1px solid #c9a0a0;
    border-radius: 5px;
}
.z-save-icons {
    display: flex;
    align-items: flex-start;
    margin-left: 27px;
}
.z-chev {
    margin: 6px 0 0 8px;
}
.z-close {
    display: flex;
    align-items: center;
    justify-content: center;
    width: 20px;
    height: 20px;
    margin: 10px 0 0 22px;
    background: #f03b43;
    border-radius: 50%;
}

.speaker {
    position: absolute;
    left: 1600px;
    top: 173px;
    width: 282px;
    height: 41px;
    padding-left: 23px;
    background: #2c3645;
    box-shadow: 0 0 4px 1px rgba(0, 0, 0, .8);
    font-size: 14.8px;
    line-height: 39px;
    color: #c9ccd2;
}

.ink {
    position: absolute;
    left: 0;
    top: 0;
    width: 1920px;
    height: 1030px;
    pointer-events: none;
    fill: none;
    stroke: #f5141c;
    stroke-width: 3.2;
    stroke-linejoin: round;
    stroke-linecap: round;
}
```
